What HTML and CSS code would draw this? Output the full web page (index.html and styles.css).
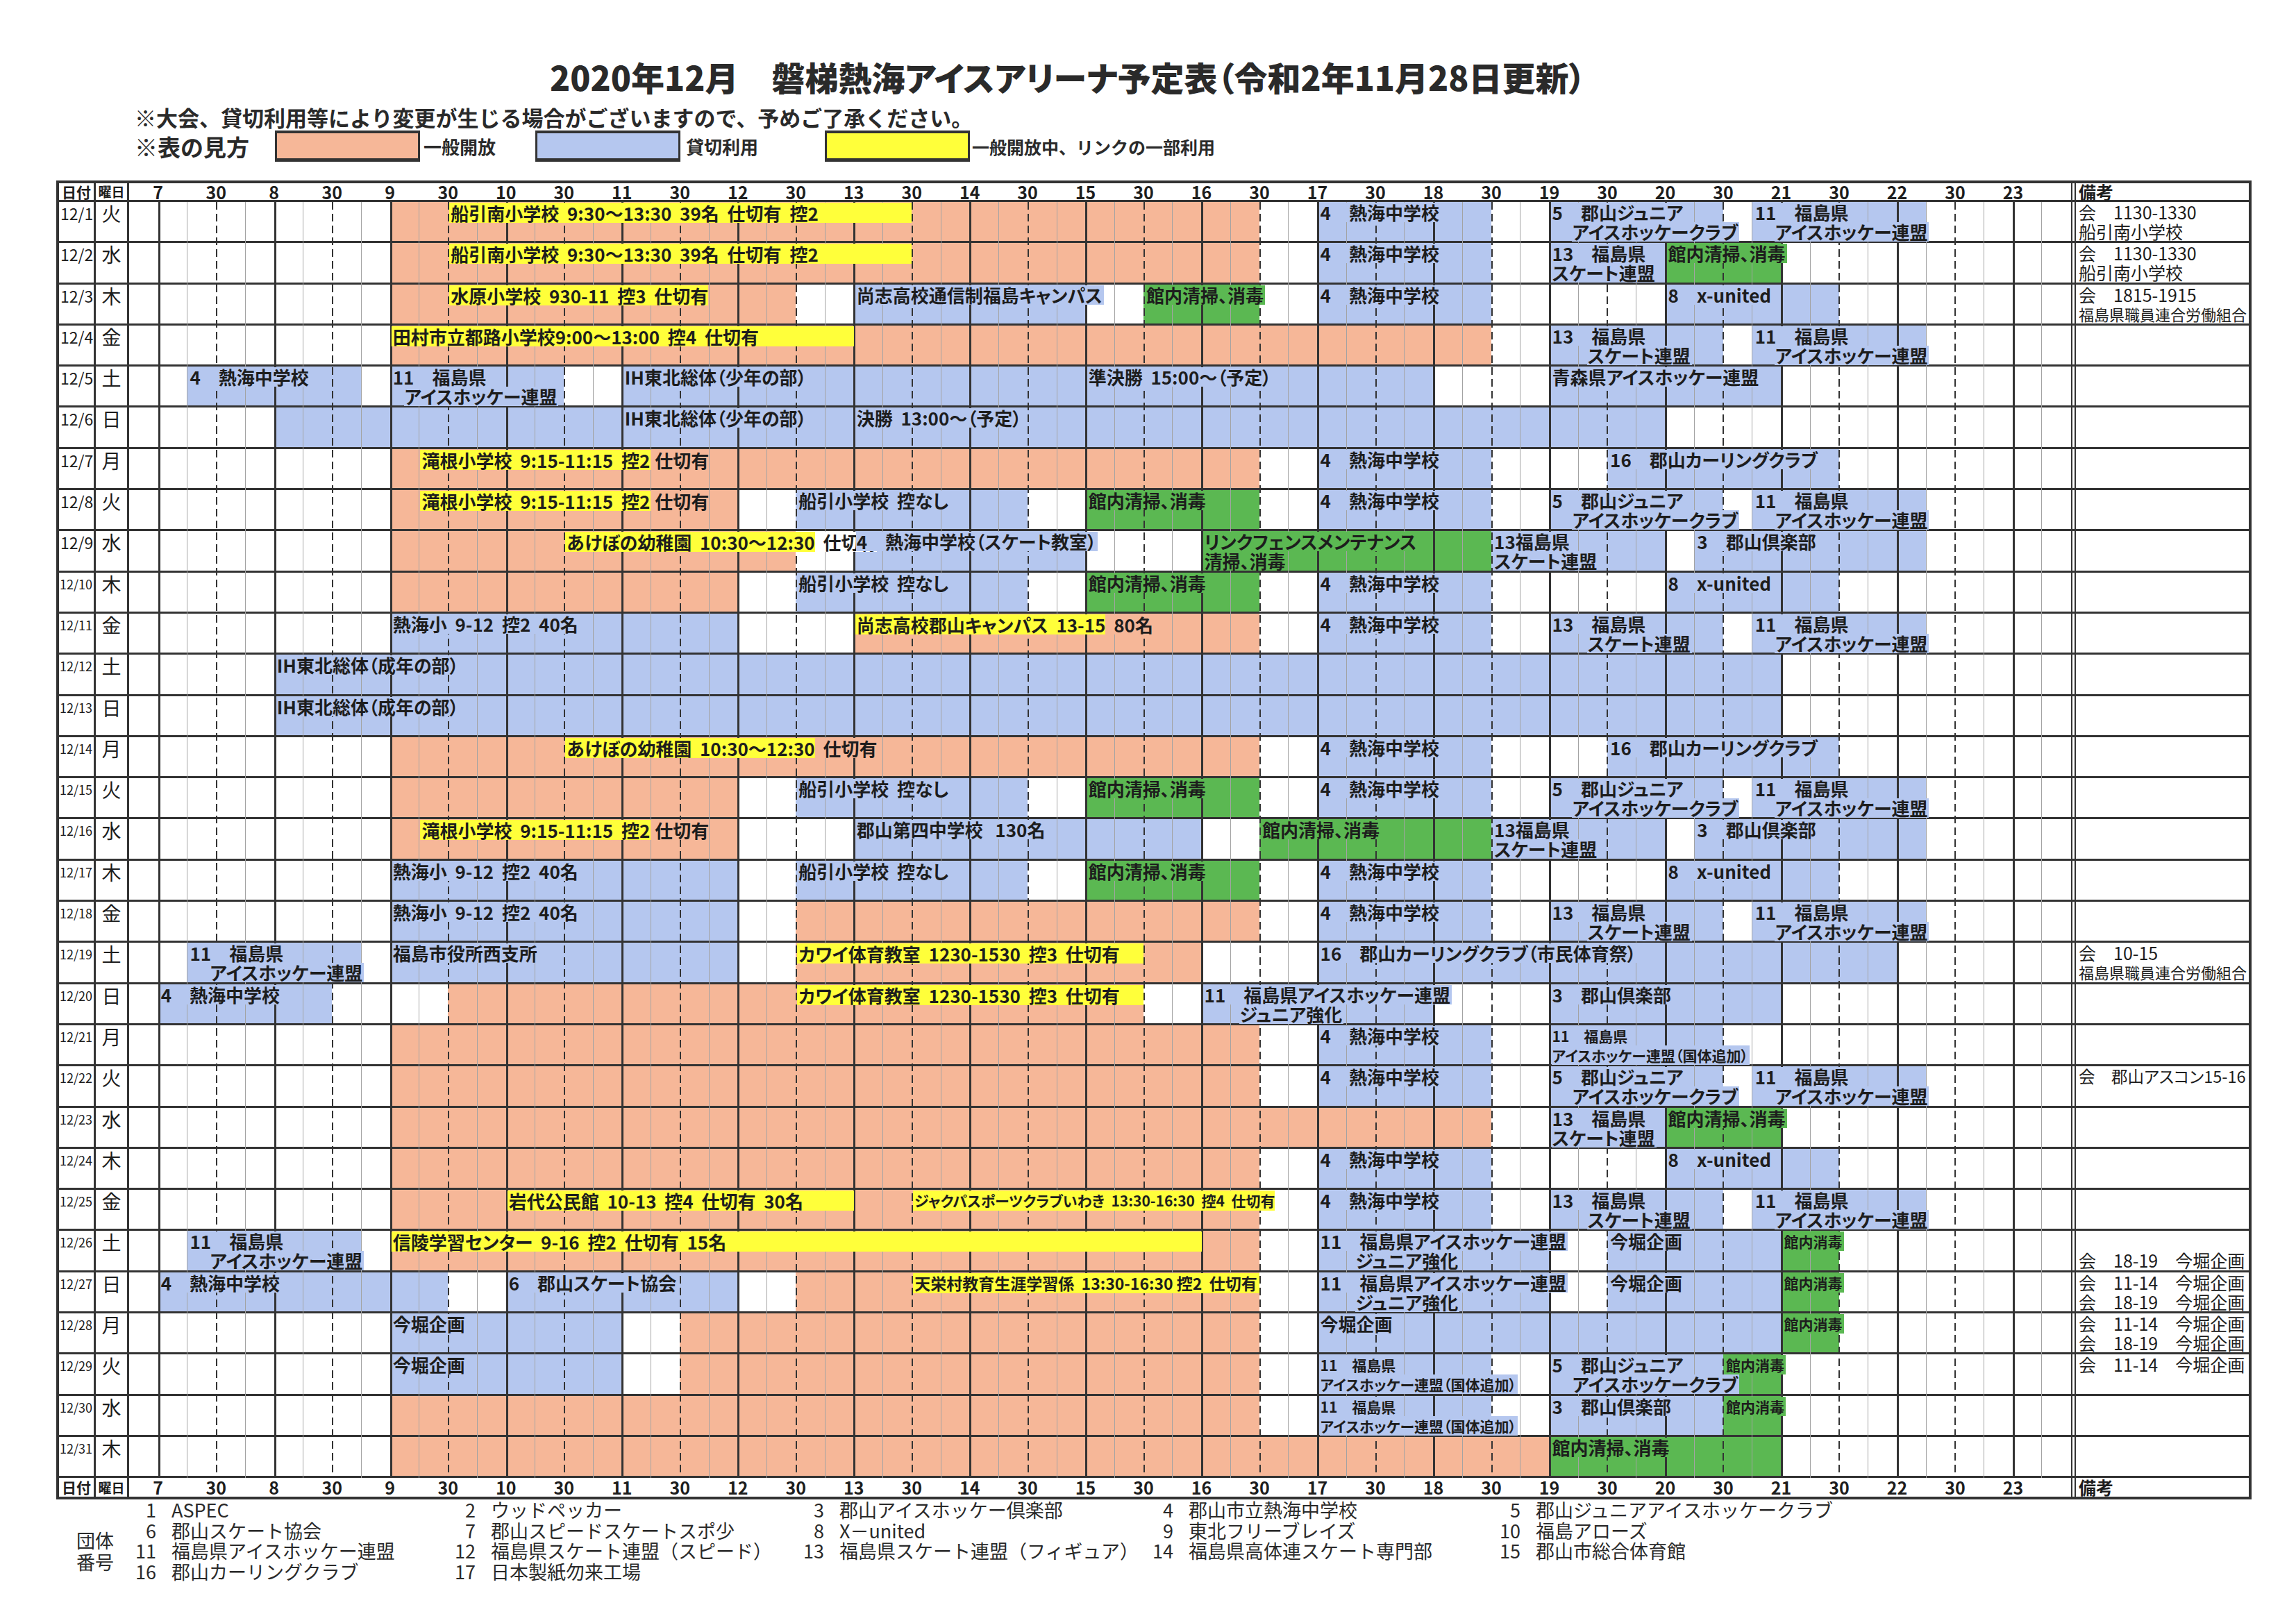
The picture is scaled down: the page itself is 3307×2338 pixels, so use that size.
FILE: index.html
```html
<!DOCTYPE html>
<html lang="ja">
<head>
<meta charset="utf-8">
<title>2020年12月 磐梯熱海アイスアリーナ予定表</title>
<link rel="stylesheet" href="styles.css">
</head>
<body>
<div class="sheet">
<h1 class="title">2020年12月　磐梯熱海アイスアリーナ予定表（令和2年11月28日更新）</h1>
<p class="note">※大会、貸切利用等により変更が生じる場合がございますので、予めご了承ください。</p>
<div class="legend">
<span class="lg-head">※表の見方</span>
<span class="sw o sw1"></span><span class="lg-label l1">一般開放</span>
<span class="sw u sw2"></span><span class="lg-label l2">貸切利用</span>
<span class="sw y sw3"></span><span class="lg-label l3">一般開放中、リンクの一部利用</span>
</div>

<div class="table">
<div class="hrow">
<div class="date h">日付</div><div class="dow h">曜日</div>
<div class="tl"><span class="hl">7</span><span class="hl">30</span><span class="hl">8</span><span class="hl">30</span><span class="hl">9</span><span class="hl">30</span><span class="hl">10</span><span class="hl">30</span><span class="hl">11</span><span class="hl">30</span><span class="hl">12</span><span class="hl">30</span><span class="hl">13</span><span class="hl">30</span><span class="hl">14</span><span class="hl">30</span><span class="hl">15</span><span class="hl">30</span><span class="hl">16</span><span class="hl">30</span><span class="hl">17</span><span class="hl">30</span><span class="hl">18</span><span class="hl">30</span><span class="hl">19</span><span class="hl">30</span><span class="hl">20</span><span class="hl">30</span><span class="hl">21</span><span class="hl">30</span><span class="hl">22</span><span class="hl">30</span><span class="hl">23</span></div>
<div class="rem h">備考</div>
</div>

<div class="row"><div class="date">12/1</div><div class="dow">火</div><div class="tl">
<div class="b o" style="grid-column:10/40"></div>
<div class="yb" style="grid-column:12/28"><span class="yt">船引南小学校  9:30～13:30  39名  仕切有  控2</span></div>
<div class="b u" style="grid-column:42/48"><span class="t">4　熱海中学校</span></div>
<div class="b u" style="grid-column:50/56"><span class="t">5　郡山ジュニア</span><span class="t i1">アイスホッケークラブ</span></div>
<div class="b u" style="grid-column:57/63"><span class="t">11　福島県</span><span class="t i1">アイスホッケー連盟</span></div>
</div><div class="rem"><span>会　1130-1330</span><span>船引南小学校</span></div></div>

<div class="row"><div class="date">12/2</div><div class="dow">水</div><div class="tl">
<div class="b o" style="grid-column:10/40"></div>
<div class="yb" style="grid-column:12/28"><span class="yt">船引南小学校  9:30～13:30  39名  仕切有  控2</span></div>
<div class="b u" style="grid-column:42/48"><span class="t">4　熱海中学校</span></div>
<div class="b u" style="grid-column:50/54"><span class="t">13　福島県</span><span class="t">スケート連盟</span></div>
<div class="b g" style="grid-column:54/58"><span class="t">館内清掃、消毒</span></div>
</div><div class="rem"><span>会　1130-1330</span><span>船引南小学校</span></div></div>

<div class="row"><div class="date">12/3</div><div class="dow">木</div><div class="tl">
<div class="b o" style="grid-column:10/24"></div>
<div class="yb" style="grid-column:12/20"><span class="yt">水原小学校  930-11  控3  仕切有</span></div>
<div class="b u" style="grid-column:26/34"><span class="t">尚志高校通信制福島キャンパス</span></div>
<div class="b g" style="grid-column:36/40"><span class="t">館内清掃、消毒</span></div>
<div class="b u" style="grid-column:42/48"><span class="t">4　熱海中学校</span></div>
<div class="b u" style="grid-column:54/60"><span class="t">8　x-united</span></div>
</div><div class="rem"><span>会　1815-1915</span><span class="rs">福島県職員連合労働組合</span></div></div>

<div class="row"><div class="date">12/4</div><div class="dow">金</div><div class="tl">
<div class="b o" style="grid-column:10/48"></div>
<div class="yb" style="grid-column:10/26"><span class="yt">田村市立都路小学校9:00～13:00  控4  仕切有</span></div>
<div class="b u" style="grid-column:50/56"><span class="t">13　福島県</span><span class="t i2">スケート連盟</span></div>
<div class="b u" style="grid-column:57/63"><span class="t">11　福島県</span><span class="t i1">アイスホッケー連盟</span></div>
</div><div class="rem"></div></div>

<div class="row"><div class="date">12/5</div><div class="dow">土</div><div class="tl">
<div class="b u" style="grid-column:3/9"><span class="t">4　熱海中学校</span></div>
<div class="b u" style="grid-column:10/16"><span class="t">11　福島県</span><span class="t ih">アイスホッケー連盟</span></div>
<div class="b u" style="grid-column:18/34"><span class="t">IH東北総体（少年の部）</span></div>
<div class="b u" style="grid-column:34/46"><span class="t">準決勝  15:00～（予定）</span></div>
<div class="b u" style="grid-column:50/58"><span class="t">青森県アイスホッケー連盟</span></div>
</div><div class="rem"></div></div>

<div class="row"><div class="date">12/6</div><div class="dow">日</div><div class="tl">
<div class="b u" style="grid-column:6/18"></div>
<div class="b u" style="grid-column:18/26"><span class="t">IH東北総体（少年の部）</span></div>
<div class="b u" style="grid-column:26/54"><span class="t">決勝  13:00～（予定）</span></div>
</div><div class="rem"></div></div>

<div class="row"><div class="date">12/7</div><div class="dow">月</div><div class="tl">
<div class="b o" style="grid-column:10/40"></div>
<div class="yb" style="grid-column:11/19"><span class="yt">滝根小学校  9:15-11:15  控2</span><span class="ov ovo"> 仕切有</span></div>
<div class="b u" style="grid-column:42/48"><span class="t">4　熱海中学校</span></div>
<div class="b u" style="grid-column:52/60"><span class="t">16　郡山カーリングクラブ</span></div>
</div><div class="rem"></div></div>

<div class="row"><div class="date">12/8</div><div class="dow">火</div><div class="tl">
<div class="b o" style="grid-column:10/22"></div>
<div class="yb" style="grid-column:11/19"><span class="yt">滝根小学校  9:15-11:15  控2</span><span class="ov ovo"> 仕切有</span></div>
<div class="b u" style="grid-column:24/32"><span class="t">船引小学校  控なし</span></div>
<div class="b g" style="grid-column:34/40"><span class="t">館内清掃、消毒</span></div>
<div class="b u" style="grid-column:42/48"><span class="t">4　熱海中学校</span></div>
<div class="b u" style="grid-column:50/56"><span class="t">5　郡山ジュニア</span><span class="t i1">アイスホッケークラブ</span></div>
<div class="b u" style="grid-column:57/63"><span class="t">11　福島県</span><span class="t i1">アイスホッケー連盟</span></div>
</div><div class="rem"></div></div>

<div class="row"><div class="date">12/9</div><div class="dow">水</div><div class="tl">
<div class="b o" style="grid-column:10/24"></div>
<div class="yb" style="grid-column:16/24"><span class="yt">あけぼの幼稚園  10:30～12:30</span><span class="ov ovw">  仕切有</span></div>
<div class="b u" style="grid-column:26/34"><span class="t">4　熱海中学校（スケート教室）</span></div>
<div class="b g" style="grid-column:38/48"><span class="t">リンクフェンスメンテナンス</span><span class="t">清掃、消毒</span></div>
<div class="b u" style="grid-column:48/54"><span class="t">13福島県</span><span class="t">スケート連盟</span></div>
<div class="b u" style="grid-column:55/63"><span class="t">3　郡山倶楽部</span></div>
</div><div class="rem"></div></div>

<div class="row"><div class="date dd">12/10</div><div class="dow">木</div><div class="tl">
<div class="b o" style="grid-column:10/22"></div>
<div class="b u" style="grid-column:24/32"><span class="t">船引小学校  控なし</span></div>
<div class="b g" style="grid-column:34/40"><span class="t">館内清掃、消毒</span></div>
<div class="b u" style="grid-column:42/48"><span class="t">4　熱海中学校</span></div>
<div class="b u" style="grid-column:54/60"><span class="t">8　x-united</span></div>
</div><div class="rem"></div></div>

<div class="row"><div class="date dd">12/11</div><div class="dow">金</div><div class="tl">
<div class="b u" style="grid-column:10/22"><span class="t">熱海小  9-12  控2  40名</span></div>
<div class="b o" style="grid-column:26/40"></div>
<div class="yb" style="grid-column:26/34"><span class="yt">尚志高校郡山キャンパス  13-15</span><span class="ov ovo">  80名</span></div>
<div class="b u" style="grid-column:42/48"><span class="t">4　熱海中学校</span></div>
<div class="b u" style="grid-column:50/56"><span class="t">13　福島県</span><span class="t i2">スケート連盟</span></div>
<div class="b u" style="grid-column:57/63"><span class="t">11　福島県</span><span class="t i1">アイスホッケー連盟</span></div>
</div><div class="rem"></div></div>

<div class="row"><div class="date dd">12/12</div><div class="dow">土</div><div class="tl">
<div class="b u" style="grid-column:6/58"><span class="t">IH東北総体（成年の部）</span></div>
</div><div class="rem"></div></div>

<div class="row"><div class="date dd">12/13</div><div class="dow">日</div><div class="tl">
<div class="b u" style="grid-column:6/58"><span class="t">IH東北総体（成年の部）</span></div>
</div><div class="rem"></div></div>

<div class="row"><div class="date dd">12/14</div><div class="dow">月</div><div class="tl">
<div class="b o" style="grid-column:10/40"></div>
<div class="yb" style="grid-column:16/24"><span class="yt">あけぼの幼稚園  10:30～12:30</span><span class="ov ovo">  仕切有</span></div>
<div class="b u" style="grid-column:42/48"><span class="t">4　熱海中学校</span></div>
<div class="b u" style="grid-column:52/60"><span class="t">16　郡山カーリングクラブ</span></div>
</div><div class="rem"></div></div>

<div class="row"><div class="date dd">12/15</div><div class="dow">火</div><div class="tl">
<div class="b o" style="grid-column:10/22"></div>
<div class="b u" style="grid-column:24/32"><span class="t">船引小学校  控なし</span></div>
<div class="b g" style="grid-column:34/40"><span class="t">館内清掃、消毒</span></div>
<div class="b u" style="grid-column:42/48"><span class="t">4　熱海中学校</span></div>
<div class="b u" style="grid-column:50/56"><span class="t">5　郡山ジュニア</span><span class="t i1">アイスホッケークラブ</span></div>
<div class="b u" style="grid-column:57/63"><span class="t">11　福島県</span><span class="t i1">アイスホッケー連盟</span></div>
</div><div class="rem"></div></div>

<div class="row"><div class="date dd">12/16</div><div class="dow">水</div><div class="tl">
<div class="b o" style="grid-column:10/22"></div>
<div class="yb" style="grid-column:11/19"><span class="yt">滝根小学校  9:15-11:15  控2</span><span class="ov ovo"> 仕切有</span></div>
<div class="b u" style="grid-column:26/38"><span class="t">郡山第四中学校   130名</span></div>
<div class="b g" style="grid-column:40/48"><span class="t">館内清掃、消毒</span></div>
<div class="b u" style="grid-column:48/54"><span class="t">13福島県</span><span class="t">スケート連盟</span></div>
<div class="b u" style="grid-column:55/63"><span class="t">3　郡山倶楽部</span></div>
</div><div class="rem"></div></div>

<div class="row"><div class="date dd">12/17</div><div class="dow">木</div><div class="tl">
<div class="b u" style="grid-column:10/22"><span class="t">熱海小  9-12  控2  40名</span></div>
<div class="b u" style="grid-column:24/32"><span class="t">船引小学校  控なし</span></div>
<div class="b g" style="grid-column:34/40"><span class="t">館内清掃、消毒</span></div>
<div class="b u" style="grid-column:42/48"><span class="t">4　熱海中学校</span></div>
<div class="b u" style="grid-column:54/60"><span class="t">8　x-united</span></div>
</div><div class="rem"></div></div>

<div class="row"><div class="date dd">12/18</div><div class="dow">金</div><div class="tl">
<div class="b u" style="grid-column:10/22"><span class="t">熱海小  9-12  控2  40名</span></div>
<div class="b o" style="grid-column:24/40"></div>
<div class="b u" style="grid-column:42/48"><span class="t">4　熱海中学校</span></div>
<div class="b u" style="grid-column:50/56"><span class="t">13　福島県</span><span class="t i2">スケート連盟</span></div>
<div class="b u" style="grid-column:57/63"><span class="t">11　福島県</span><span class="t i1">アイスホッケー連盟</span></div>
</div><div class="rem"></div></div>

<div class="row"><div class="date dd">12/19</div><div class="dow">土</div><div class="tl">
<div class="b u" style="grid-column:3/9"><span class="t">11　福島県</span><span class="t i1">アイスホッケー連盟</span></div>
<div class="b u" style="grid-column:10/22"><span class="t">福島市役所西支所</span></div>
<div class="b o" style="grid-column:24/38"></div>
<div class="yb" style="grid-column:24/36"><span class="yt">カワイ体育教室  1230-1530  控3  仕切有</span></div>
<div class="b u" style="grid-column:42/62"><span class="t">16　郡山カーリングクラブ（市民体育祭）</span></div>
</div><div class="rem"><span>会　10-15</span><span class="rs">福島県職員連合労働組合</span></div></div>

<div class="row"><div class="date dd">12/20</div><div class="dow">日</div><div class="tl">
<div class="b u" style="grid-column:2/8"><span class="t">4　熱海中学校</span></div>
<div class="b o" style="grid-column:12/36"></div>
<div class="yb" style="grid-column:24/36"><span class="yt">カワイ体育教室  1230-1530  控3  仕切有</span></div>
<div class="b u" style="grid-column:38/46"><span class="t">11　福島県アイスホッケー連盟</span><span class="t i2">ジュニア強化</span></div>
<div class="b u" style="grid-column:50/58"><span class="t">3　郡山倶楽部</span></div>
</div><div class="rem"></div></div>

<div class="row"><div class="date dd">12/21</div><div class="dow">月</div><div class="tl">
<div class="b o" style="grid-column:10/40"></div>
<div class="b u" style="grid-column:42/48"><span class="t">4　熱海中学校</span></div>
<div class="b u" style="grid-column:50/56"><span class="t s21">11　福島県</span><span class="t s21">アイスホッケー連盟（国体追加）</span></div>
</div><div class="rem"></div></div>

<div class="row"><div class="date dd">12/22</div><div class="dow">火</div><div class="tl">
<div class="b o" style="grid-column:10/40"></div>
<div class="b u" style="grid-column:42/48"><span class="t">4　熱海中学校</span></div>
<div class="b u" style="grid-column:50/56"><span class="t">5　郡山ジュニア</span><span class="t i1">アイスホッケークラブ</span></div>
<div class="b u" style="grid-column:57/63"><span class="t">11　福島県</span><span class="t i1">アイスホッケー連盟</span></div>
</div><div class="rem"><span class="rn">会　郡山アスコン15-16</span></div></div>

<div class="row"><div class="date dd">12/23</div><div class="dow">水</div><div class="tl">
<div class="b o" style="grid-column:10/48"></div>
<div class="b u" style="grid-column:50/54"><span class="t">13　福島県</span><span class="t">スケート連盟</span></div>
<div class="b g" style="grid-column:54/58"><span class="t">館内清掃、消毒</span></div>
</div><div class="rem"></div></div>

<div class="row"><div class="date dd">12/24</div><div class="dow">木</div><div class="tl">
<div class="b o" style="grid-column:10/40"></div>
<div class="b u" style="grid-column:42/48"><span class="t">4　熱海中学校</span></div>
<div class="b u" style="grid-column:54/60"><span class="t">8　x-united</span></div>
</div><div class="rem"></div></div>

<div class="row"><div class="date dd">12/25</div><div class="dow">金</div><div class="tl">
<div class="b o" style="grid-column:10/40"></div>
<div class="yb" style="grid-column:14/26"><span class="yt">岩代公民館  10-13  控4  仕切有  30名</span></div>
<div class="yb s21" style="grid-column:28/40"><span class="yt">ジャクパスポーツクラブいわき  13:30-16:30  控4  仕切有</span></div>
<div class="b u" style="grid-column:42/48"><span class="t">4　熱海中学校</span></div>
<div class="b u" style="grid-column:50/56"><span class="t">13　福島県</span><span class="t i2">スケート連盟</span></div>
<div class="b u" style="grid-column:57/63"><span class="t">11　福島県</span><span class="t i1">アイスホッケー連盟</span></div>
</div><div class="rem"></div></div>

<div class="row"><div class="date dd">12/26</div><div class="dow">土</div><div class="tl">
<div class="b u" style="grid-column:3/9"><span class="t">11　福島県</span><span class="t i1">アイスホッケー連盟</span></div>
<div class="b o" style="grid-column:10/40"></div>
<div class="yb" style="grid-column:10/38"><span class="yt">信陵学習センター  9-16  控2  仕切有  15名</span></div>
<div class="b u" style="grid-column:42/50"><span class="t">11　福島県アイスホッケー連盟</span><span class="t i2">ジュニア強化</span></div>
<div class="b u" style="grid-column:52/58"><span class="t">今堀企画</span></div>
<div class="b g" style="grid-column:58/60"><span class="t s21">館内消毒</span></div>
</div><div class="rem bot"><span>会　18-19　今堀企画</span></div></div>

<div class="row"><div class="date dd">12/27</div><div class="dow">日</div><div class="tl">
<div class="b u" style="grid-column:2/12"><span class="t">4　熱海中学校</span></div>
<div class="b u" style="grid-column:14/22"><span class="t">6　郡山スケート協会</span></div>
<div class="b o" style="grid-column:24/40"></div>
<div class="yb s23" style="grid-column:28/40"><span class="yt">天栄村教育生涯学習係  13:30-16:30 控2  仕切有</span></div>
<div class="b u" style="grid-column:42/50"><span class="t">11　福島県アイスホッケー連盟</span><span class="t i2">ジュニア強化</span></div>
<div class="b u" style="grid-column:52/58"><span class="t">今堀企画</span></div>
<div class="b g" style="grid-column:58/60"><span class="t s21">館内消毒</span></div>
</div><div class="rem"><span>会　11-14　今堀企画</span><span>会　18-19　今堀企画</span></div></div>

<div class="row"><div class="date dd">12/28</div><div class="dow">月</div><div class="tl">
<div class="b u" style="grid-column:10/18"><span class="t">今堀企画</span></div>
<div class="b o" style="grid-column:20/40"></div>
<div class="b u" style="grid-column:42/58"><span class="t">今堀企画</span></div>
<div class="b g" style="grid-column:58/60"><span class="t s21">館内消毒</span></div>
</div><div class="rem"><span>会　11-14　今堀企画</span><span>会　18-19　今堀企画</span></div></div>

<div class="row"><div class="date dd">12/29</div><div class="dow">火</div><div class="tl">
<div class="b u" style="grid-column:10/18"><span class="t">今堀企画</span></div>
<div class="b o" style="grid-column:20/40"></div>
<div class="b u" style="grid-column:42/48"><span class="t s21">11　福島県</span><span class="t s21">アイスホッケー連盟（国体追加）</span></div>
<div class="b u" style="grid-column:50/56"><span class="t">5　郡山ジュニア</span><span class="t i1">アイスホッケークラブ</span></div>
<div class="b g" style="grid-column:56/58"><span class="t s21">館内消毒</span></div>
</div><div class="rem"><span>会　11-14　今堀企画</span></div></div>

<div class="row"><div class="date dd">12/30</div><div class="dow">水</div><div class="tl">
<div class="b o" style="grid-column:10/40"></div>
<div class="b u" style="grid-column:42/48"><span class="t s21">11　福島県</span><span class="t s21">アイスホッケー連盟（国体追加）</span></div>
<div class="b u" style="grid-column:50/56"><span class="t">3　郡山倶楽部</span></div>
<div class="b g" style="grid-column:56/58"><span class="t s21">館内消毒</span></div>
</div><div class="rem"></div></div>

<div class="row"><div class="date dd">12/31</div><div class="dow">木</div><div class="tl">
<div class="b o" style="grid-column:10/50"></div>
<div class="b g" style="grid-column:50/58"><span class="t">館内清掃、消毒</span></div>
</div><div class="rem"></div></div>

<div class="hrow bottom">
<div class="date h">日付</div><div class="dow h">曜日</div>
<div class="tl"><span class="hl">7</span><span class="hl">30</span><span class="hl">8</span><span class="hl">30</span><span class="hl">9</span><span class="hl">30</span><span class="hl">10</span><span class="hl">30</span><span class="hl">11</span><span class="hl">30</span><span class="hl">12</span><span class="hl">30</span><span class="hl">13</span><span class="hl">30</span><span class="hl">14</span><span class="hl">30</span><span class="hl">15</span><span class="hl">30</span><span class="hl">16</span><span class="hl">30</span><span class="hl">17</span><span class="hl">30</span><span class="hl">18</span><span class="hl">30</span><span class="hl">19</span><span class="hl">30</span><span class="hl">20</span><span class="hl">30</span><span class="hl">21</span><span class="hl">30</span><span class="hl">22</span><span class="hl">30</span><span class="hl">23</span></div>
<div class="rem h">備考</div>
</div>

<div class="gridlines"><i class="gl"></i><i class="gl"></i><i class="gl"></i><i class="gl"></i><i class="gl"></i><i class="gl"></i><i class="gl"></i><i class="gl"></i><i class="gl"></i><i class="gl"></i><i class="gl"></i><i class="gl"></i><i class="gl"></i><i class="gl"></i><i class="gl"></i><i class="gl"></i><i class="gl"></i><i class="gl"></i><i class="gl"></i><i class="gl"></i><i class="gl"></i><i class="gl"></i><i class="gl"></i><i class="gl"></i><i class="gl"></i><i class="gl"></i><i class="gl"></i><i class="gl"></i><i class="gl"></i><i class="gl"></i><i class="gl"></i><i class="gl"></i><i class="gl"></i><i class="gl"></i><i class="gl"></i><i class="gl"></i><i class="gl"></i><i class="gl"></i><i class="gl"></i><i class="gl"></i><i class="gl"></i><i class="gl"></i><i class="gl"></i><i class="gl"></i><i class="gl"></i><i class="gl"></i><i class="gl"></i><i class="gl"></i><i class="gl"></i><i class="gl"></i><i class="gl"></i><i class="gl"></i><i class="gl"></i><i class="gl"></i><i class="gl"></i><i class="gl"></i><i class="gl"></i><i class="gl"></i><i class="gl"></i><i class="gl"></i><i class="gl"></i><i class="gl"></i><i class="gl"></i><i class="gl"></i><i class="gl"></i><i class="gl"></i><i class="gl"></i></div>
</div>

<div class="groups">
<div class="gtitle"><span>団体</span><span>番号</span></div>
<div class="glist">
<div class="ge"><span class="gn">1</span><span class="gname">ASPEC</span></div>
<div class="ge"><span class="gn">2</span><span class="gname">ウッドペッカー</span></div>
<div class="ge"><span class="gn">3</span><span class="gname">郡山アイスホッケー倶楽部</span></div>
<div class="ge"><span class="gn">4</span><span class="gname">郡山市立熱海中学校</span></div>
<div class="ge"><span class="gn">5</span><span class="gname">郡山ジュニアアイスホッケークラブ</span></div>
<div class="ge"><span class="gn">6</span><span class="gname">郡山スケート協会</span></div>
<div class="ge"><span class="gn">7</span><span class="gname">郡山スピードスケートスポ少</span></div>
<div class="ge"><span class="gn">8</span><span class="gname">X－united</span></div>
<div class="ge"><span class="gn">9</span><span class="gname">東北フリーブレイズ</span></div>
<div class="ge"><span class="gn">10</span><span class="gname">福島アローズ</span></div>
<div class="ge"><span class="gn">11</span><span class="gname">福島県アイスホッケー連盟</span></div>
<div class="ge"><span class="gn">12</span><span class="gname">福島県スケート連盟（スピード）</span></div>
<div class="ge"><span class="gn">13</span><span class="gname">福島県スケート連盟（フィギュア）</span></div>
<div class="ge"><span class="gn">14</span><span class="gname">福島県高体連スケート専門部</span></div>
<div class="ge"><span class="gn">15</span><span class="gname">郡山市総合体育館</span></div>
<div class="ge"><span class="gn">16</span><span class="gname">郡山カーリングクラブ</span></div>
<div class="ge"><span class="gn">17</span><span class="gname">日本製紙勿来工場</span></div>
</div>
</div>
</div>
</body>
</html>
```

FILE: styles.css
```css
html, body {
  margin: 0;
  padding: 0;
  background: #ffffff;
}
body {
  color: #1d1d1d;
  font-family: "Noto Sans CJK JP", "Noto Sans", sans-serif;
}
.sheet {
  width: 3307px;
  height: 2338px;
  padding-top: 82px;
  box-sizing: border-box;
  overflow: hidden;
}

/* heading */
.title {
  margin: 0 0 0 792px;
  font-size: 48px;
  line-height: 56px;
  font-weight: 900;
  color: #2a2a2a;
  white-space: nowrap;
  font-feature-settings: "palt" 1;
}
.note {
  margin: 13px 0 0 194px;
  font-size: 31px;
  line-height: 36px;
  font-weight: 700;
  color: #2a2a2a;
  white-space: nowrap;
}
.legend {
  display: flex;
  align-items: center;
  height: 45px;
  margin: 1px 0 0 194px;
  color: #2a2a2a;
}
.lg-head {
  width: 166px;
  font-size: 33px;
  font-weight: 700;
  white-space: nowrap;
}
.sw {
  width: 209px;
  height: 45px;
  box-sizing: border-box;
  border: 3px solid #333;
  border-top-width: 4px;
  border-bottom-width: 5px;
}
.sw1 { margin-left: 36px; }
.sw2 { margin-left: 57px; }
.sw3 { margin-left: 96px; }
.lg-label {
  font-size: 26px;
  font-weight: 700;
  white-space: nowrap;
}
.l1 { margin-left: 5px; }
.l2 { margin-left: 8px; }
.l3 { margin-left: 3px; font-size: 25px; }

/* colours */
.o { background-color: #f6b798; }
.u { background-color: #b5c7ef; }
.g { background-color: #5bb852; }
.y { background-color: #ffff3a; }

/* table */
.table {
  position: relative;
  margin: 27px 0 0 81px;
  width: 3162px;
  box-sizing: border-box;
  border: 4px solid #333;
}
.hrow {
  display: flex;
  height: 27px;
  box-sizing: border-box;
  border-bottom: 3px solid #333;
}
.hrow.bottom {
  border-bottom: 0;
}
.row {
  display: flex;
  height: 59.3px;
  box-sizing: border-box;
  border-bottom: 3px solid #333;
}
.date {
  width: 53px;
  flex: none;
  box-sizing: border-box;
  border-right: 3px solid #333;
  padding-left: 2px;
  font-size: 23px;
  line-height: 32px;
  white-space: nowrap;
}
.date.dd {
  font-size: 18px;
  padding-left: 1px;
}
.dow {
  width: 48px;
  flex: none;
  box-sizing: border-box;
  border-right: 3px solid #333;
  text-align: center;
  font-size: 28px;
  line-height: 32px;
}
.date.h {
  padding-left: 0;
  text-align: center;
  font-size: 21px;
  line-height: 24px;
  font-weight: 700;
}
.dow.h {
  font-size: 19px;
  line-height: 24px;
  font-weight: 700;
}
.bottom .date.h, .bottom .dow.h { line-height: 27px; }

.tl {
  width: 2797px;
  flex: none;
  display: grid;
  grid-template-columns: repeat(67, minmax(0, 1fr));
  grid-template-rows: minmax(0, 1fr);
}
.rem {
  flex: 1;
  min-width: 0;
  box-sizing: border-box;
  border-left: 7px double #333;
  padding-left: 4px;
  display: flex;
  flex-direction: column;
  align-items: flex-start;
  font-size: 25px;
  line-height: 28px;
  white-space: nowrap;
  font-feature-settings: "palt" 1;
}
.rem.bot {
  justify-content: flex-end;
  padding-bottom: 1px;
}
.rem .rs { font-size: 22px; }
.rem .rn { font-size: 23.5px; }
.rem.h {
  font-size: 25px;
  line-height: 24px;
  font-weight: 700;
}
.bottom .rem.h { line-height: 27px; }

.hl {
  grid-row: 1;
  grid-column: span 2;
  text-align: center;
  font-size: 25px;
  line-height: 24px;
  font-weight: 700;
  white-space: nowrap;
}
.bottom .hl { line-height: 27px; }

/* blocks */
.b {
  grid-row: 1;
  min-width: 0;
  display: flex;
  flex-direction: column;
  align-items: flex-start;
  padding-top: 1px;
}
.t {
  position: relative;
  z-index: 3;
  background: inherit;
  margin-left: 3px;
  padding: 0 2px 0 1px;
  font-size: 26px;
  line-height: 28px;
  font-weight: 700;
  white-space: pre;
  font-feature-settings: "palt" 1;
}
.t.i1 { margin-left: 32px; }
.t.i2 { margin-left: 54px; }
.t.ih { margin-left: 20px; }
.t.s21 { font-size: 21px; }

.yb {
  grid-row: 1;
  align-self: start;
  min-width: 0;
  position: relative;
  z-index: 3;
  margin: 1px 0 0 2px;
  height: 29px;
  font-size: 26px;
  line-height: 29px;
  font-weight: 700;
  white-space: pre;
  font-feature-settings: "palt" 1;
}
.yb.s21 { font-size: 21px; }
.yb.s23 { font-size: 23px; }
.yt {
  display: inline-block;
  vertical-align: top;
  min-width: 100%;
  height: 29px;
  box-sizing: border-box;
  padding-left: 2px;
  background: #ffff3a;
}
.ov {
  display: inline-block;
  vertical-align: top;
  height: 29px;
}
.ovo { background: #f6b798; }
.ovw { background: #ffffff; }

/* vertical grid lines laid over the time area */
.gridlines {
  position: absolute;
  left: 101px;
  top: 27px;
  width: 2797px;
  height: 1838.3px;
  display: flex;
  z-index: 2;
  pointer-events: none;
}
.gl {
  display: block;
  flex: none;
  width: calc(2797px / 67);
  height: 100%;
  box-sizing: border-box;
}
.gl:nth-child(odd) { border-left: 1px solid #a3a3a3; }
.gl:first-child { border-left: 0; }
.gl:nth-child(4n+2) { border-left: 3px solid #333; }
.gl:nth-child(4n) {
  background: repeating-linear-gradient(to bottom, #333 0 11px, transparent 11px 17px) left top / 2px 100% no-repeat;
}

/* group numbers */
.groups {
  display: flex;
  margin-left: 110px;
  color: #2a2a2a;
}
.gtitle {
  width: 71px;
  flex: none;
  padding-top: 43px;
  display: flex;
  flex-direction: column;
  font-size: 27px;
  line-height: 31px;
}
.glist {
  display: grid;
  grid-template-columns: 460px 502px 503px 500px 500px;
  grid-auto-rows: 29.6px;
  font-size: 27px;
  line-height: 29.6px;
}
.ge {
  display: flex;
  white-space: nowrap;
}
.gn {
  width: 44px;
  flex: none;
  text-align: right;
}
.gname {
  margin-left: 22px;
}
```
